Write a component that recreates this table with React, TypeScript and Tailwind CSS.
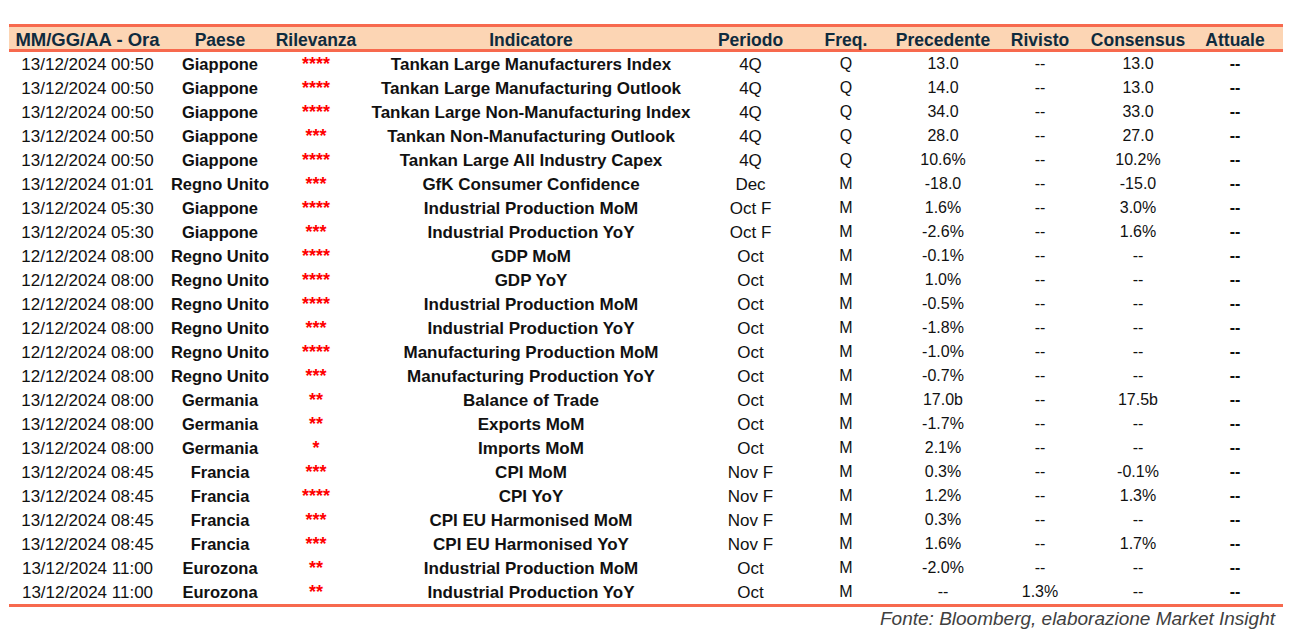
import React from "react";

type Row = [string, string, string, string, string, string, string, string, string];

const rows: Row[] = [
  ["13/12/2024 00:50", "Giappone", "****", "Tankan Large Manufacturers Index", "4Q", "Q", "13.0", "--", "13.0"],
  ["13/12/2024 00:50", "Giappone", "****", "Tankan Large Manufacturing Outlook", "4Q", "Q", "14.0", "--", "13.0"],
  ["13/12/2024 00:50", "Giappone", "****", "Tankan Large Non-Manufacturing Index", "4Q", "Q", "34.0", "--", "33.0"],
  ["13/12/2024 00:50", "Giappone", "***", "Tankan Non-Manufacturing Outlook", "4Q", "Q", "28.0", "--", "27.0"],
  ["13/12/2024 00:50", "Giappone", "****", "Tankan Large All Industry Capex", "4Q", "Q", "10.6%", "--", "10.2%"],
  ["13/12/2024 01:01", "Regno Unito", "***", "GfK Consumer Confidence", "Dec", "M", "-18.0", "--", "-15.0"],
  ["13/12/2024 05:30", "Giappone", "****", "Industrial Production MoM", "Oct F", "M", "1.6%", "--", "3.0%"],
  ["13/12/2024 05:30", "Giappone", "***", "Industrial Production YoY", "Oct F", "M", "-2.6%", "--", "1.6%"],
  ["12/12/2024 08:00", "Regno Unito", "****", "GDP MoM", "Oct", "M", "-0.1%", "--", "--"],
  ["12/12/2024 08:00", "Regno Unito", "****", "GDP YoY", "Oct", "M", "1.0%", "--", "--"],
  ["12/12/2024 08:00", "Regno Unito", "****", "Industrial Production MoM", "Oct", "M", "-0.5%", "--", "--"],
  ["12/12/2024 08:00", "Regno Unito", "***", "Industrial Production YoY", "Oct", "M", "-1.8%", "--", "--"],
  ["12/12/2024 08:00", "Regno Unito", "****", "Manufacturing Production MoM", "Oct", "M", "-1.0%", "--", "--"],
  ["12/12/2024 08:00", "Regno Unito", "***", "Manufacturing Production YoY", "Oct", "M", "-0.7%", "--", "--"],
  ["13/12/2024 08:00", "Germania", "**", "Balance of Trade", "Oct", "M", "17.0b", "--", "17.5b"],
  ["13/12/2024 08:00", "Germania", "**", "Exports MoM", "Oct", "M", "-1.7%", "--", "--"],
  ["13/12/2024 08:00", "Germania", "*", "Imports MoM", "Oct", "M", "2.1%", "--", "--"],
  ["13/12/2024 08:45", "Francia", "***", "CPI MoM", "Nov F", "M", "0.3%", "--", "-0.1%"],
  ["13/12/2024 08:45", "Francia", "****", "CPI YoY", "Nov F", "M", "1.2%", "--", "1.3%"],
  ["13/12/2024 08:45", "Francia", "***", "CPI EU Harmonised MoM", "Nov F", "M", "0.3%", "--", "--"],
  ["13/12/2024 08:45", "Francia", "***", "CPI EU Harmonised YoY", "Nov F", "M", "1.6%", "--", "1.7%"],
  ["13/12/2024 11:00", "Eurozona", "**", "Industrial Production MoM", "Oct", "M", "-2.0%", "--", "--"],
  ["13/12/2024 11:00", "Eurozona", "**", "Industrial Production YoY", "Oct", "M", "--", "1.3%", "--"],
];

const headers = [
  "Paese",
  "Rilevanza",
  "Indicatore",
  "Periodo",
  "Freq.",
  "Precedente",
  "Rivisto",
  "Consensus",
  "Attuale",
];

const grid =
  "grid grid-cols-[157px_108px_84px_346px_93px_98px_96px_98px_98px_96px]";

export default function App() {
  return (
    <div
      className="w-[1293px] h-[631px] bg-white pt-[24px] pl-[9px]"
      style={{ fontFamily: '"Liberation Sans", Arial, sans-serif' }}
    >
      <div className="w-[1274px]">
        <div
          className={`${grid} h-[28px] pt-[4px] items-center border-t-[3px] border-b-[3px] border-[#f7694e] bg-[#fcd5b4] text-[17.5px] font-bold text-[#0f2b3e]`}
        >
          <div className="text-center leading-none whitespace-nowrap text-[18.5px]">MM/GG/AA - Ora</div>
          {headers.map((h) => (
            <div key={h} className="text-center leading-none whitespace-nowrap">
              {h}
            </div>
          ))}
        </div>
        <div className="border-b-[3px] border-[#f7694e]">
          {rows.map((r, i) => (
            <div key={i} className={`${grid} h-[24px] items-center text-[#111] whitespace-nowrap leading-none`}>
              <div className="text-center text-[17px]">{r[0]}</div>
              <div className="text-center text-[16.5px] font-bold">{r[1]}</div>
              <div className="text-center text-[18px] font-bold text-[#ff0000]">{r[2]}</div>
              <div className="text-center text-[17px] font-bold">{r[3]}</div>
              <div className="text-center text-[17px]">{r[4]}</div>
              <div className="text-center text-[16px]">{r[5]}</div>
              <div className="text-center text-[16px]">{r[6]}</div>
              <div className="text-center text-[16px]">{r[7]}</div>
              <div className="text-center text-[16px]">{r[8]}</div>
              <div className="text-center text-[16px] font-bold">--</div>
            </div>
          ))}
        </div>
        <div className="flex justify-end pr-[8px] pt-[1px] text-[19px] italic text-[#404040] leading-[22px]">
          Fonte: Bloomberg, elaborazione Market Insight
        </div>
      </div>
    </div>
  );
}
